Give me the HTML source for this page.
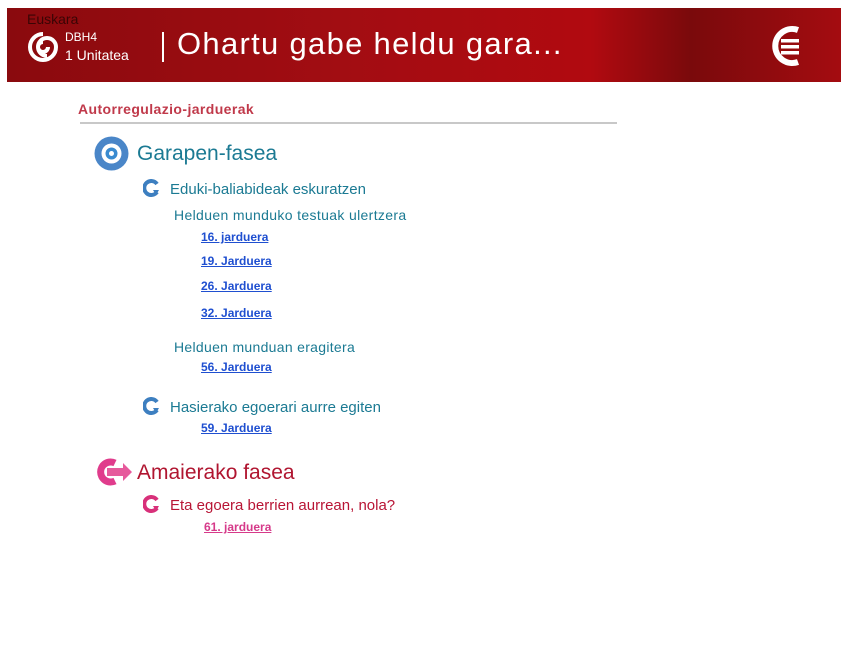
<!DOCTYPE html>
<html><head><meta charset="utf-8"><style>
body{margin:0;width:848px;height:655px;background:#fff;position:relative;font-family:"Liberation Sans",sans-serif;overflow:hidden}
.a{position:absolute;white-space:nowrap}
#ban{position:absolute;left:7px;top:8px;width:834px;height:74px;background:linear-gradient(90deg,#8a0a0e 0%,#a20d12 40%,#b10a10 70%,#7a0a0c 82%,#a40c10 100%)}
.t{color:#1b7a93}
.l{color:#1f4fd0;font-weight:bold;font-size:12px;text-decoration:underline}
.p{color:#b8123a}
</style></head><body>
<div id="ban">
<div class="a" style="left:20px;top:3px;font-size:14px;color:#3a0505">Euskara</div>
<svg class="a" style="left:19px;top:22px" width="34" height="34" viewBox="0 0 34 34"><path d="M17 4a13 13 0 1 0 13 13a9 9 0 1 0-9 9M17 12a5 5 0 1 0 5 5" fill="none" stroke="#fff" stroke-width="4"/></svg>
<div class="a" style="left:58px;top:22px;font-size:12px;color:#fff">DBH4</div>
<div class="a" style="left:58px;top:39px;font-size:14px;color:#fff">1 Unitatea</div>
<div class="a" style="left:155px;top:24px;width:2px;height:30px;background:#fff"></div>
<div class="a" style="left:170px;top:18px;font-size:31px;color:#fff;letter-spacing:1.3px">Ohartu gabe heldu gara...</div>
<svg class="a" style="left:761px;top:16px" width="40" height="44" viewBox="0 0 40 44"><path d="M30 6A17 17 0 1 0 30 38" fill="none" stroke="#fff" stroke-width="6"/><rect x="13" y="15" width="18" height="3.5" fill="#fff"/><rect x="13" y="21" width="18" height="3.5" fill="#fff"/><rect x="13" y="27" width="18" height="3.5" fill="#fff"/></svg>
</div>
<div class="a" style="left:78px;top:101px;font-size:14px;font-weight:bold;color:#c0394a;letter-spacing:0.4px">Autorregulazio-jarduerak</div>
<div class="a" style="left:80px;top:122px;width:537px;height:2px;background:#c8c8c8"></div>
<svg class="a" style="left:93px;top:135px" width="37" height="37" viewBox="0 0 37 37"><circle cx="18.5" cy="18.5" r="17" fill="#4a86c8"/><circle cx="18.5" cy="18.5" r="10" fill="#fff"/><circle cx="18.5" cy="18.5" r="6" fill="#3a8bd0"/><circle cx="18.5" cy="18.5" r="2.5" fill="#fff"/></svg>
<div class="a t" style="left:137px;top:142px;font-size:21px">Garapen-fasea</div>
<svg class="a" style="left:143px;top:179px" width="18" height="18" viewBox="0 0 18 18"><path d="M14 5A7 7 0 1 0 14 13" fill="none" stroke="#3d7fc0" stroke-width="4"/><path d="M10 11l6 0l-3 5z" fill="#3d7fc0"/></svg>
<div class="a t" style="left:170px;top:181px;font-size:15px">Eduki-baliabideak eskuratzen</div>
<div class="a t" style="left:174px;top:207px;font-size:14px;letter-spacing:0.35px">Helduen munduko testuak ulertzera</div>
<div class="a l" style="left:201px;top:230px">16. jarduera</div>
<div class="a l" style="left:201px;top:254px">19. Jarduera</div>
<div class="a l" style="left:201px;top:279px">26. Jarduera</div>
<div class="a l" style="left:201px;top:306px">32. Jarduera</div>
<div class="a t" style="left:174px;top:339px;font-size:14px;letter-spacing:0.3px">Helduen munduan eragitera</div>
<div class="a l" style="left:201px;top:360px">56. Jarduera</div>
<svg class="a" style="left:143px;top:397px" width="18" height="18" viewBox="0 0 18 18"><path d="M14 5A7 7 0 1 0 14 13" fill="none" stroke="#3d7fc0" stroke-width="4"/><path d="M10 11l6 0l-3 5z" fill="#3d7fc0"/></svg>
<div class="a t" style="left:170px;top:399px;font-size:15px">Hasierako egoerari aurre egiten</div>
<div class="a l" style="left:201px;top:421px">59. Jarduera</div>
<svg class="a" style="left:93px;top:456px" width="40" height="32" viewBox="0 0 40 32"><path d="M22 7A10 10 0 1 0 22 25" fill="none" stroke="#e03c8c" stroke-width="7"/><path d="M14 12h16v-5l9 9l-9 9v-5h-16z" fill="#e65a9c"/></svg>
<div class="a p" style="left:137px;top:461px;font-size:21px;color:#b01530">Amaierako fasea</div>
<svg class="a" style="left:143px;top:495px" width="18" height="18" viewBox="0 0 18 18"><path d="M14 5A7 7 0 1 0 14 13" fill="none" stroke="#d8307a" stroke-width="4"/><path d="M10 11l6 0l-3 5z" fill="#d8307a"/></svg>
<div class="a p" style="left:170px;top:497px;font-size:15px;color:#b81535">Eta egoera berrien aurrean, nola?</div>
<div class="a l" style="left:204px;top:520px;color:#d63a8a">61. jarduera</div>
</body></html>
